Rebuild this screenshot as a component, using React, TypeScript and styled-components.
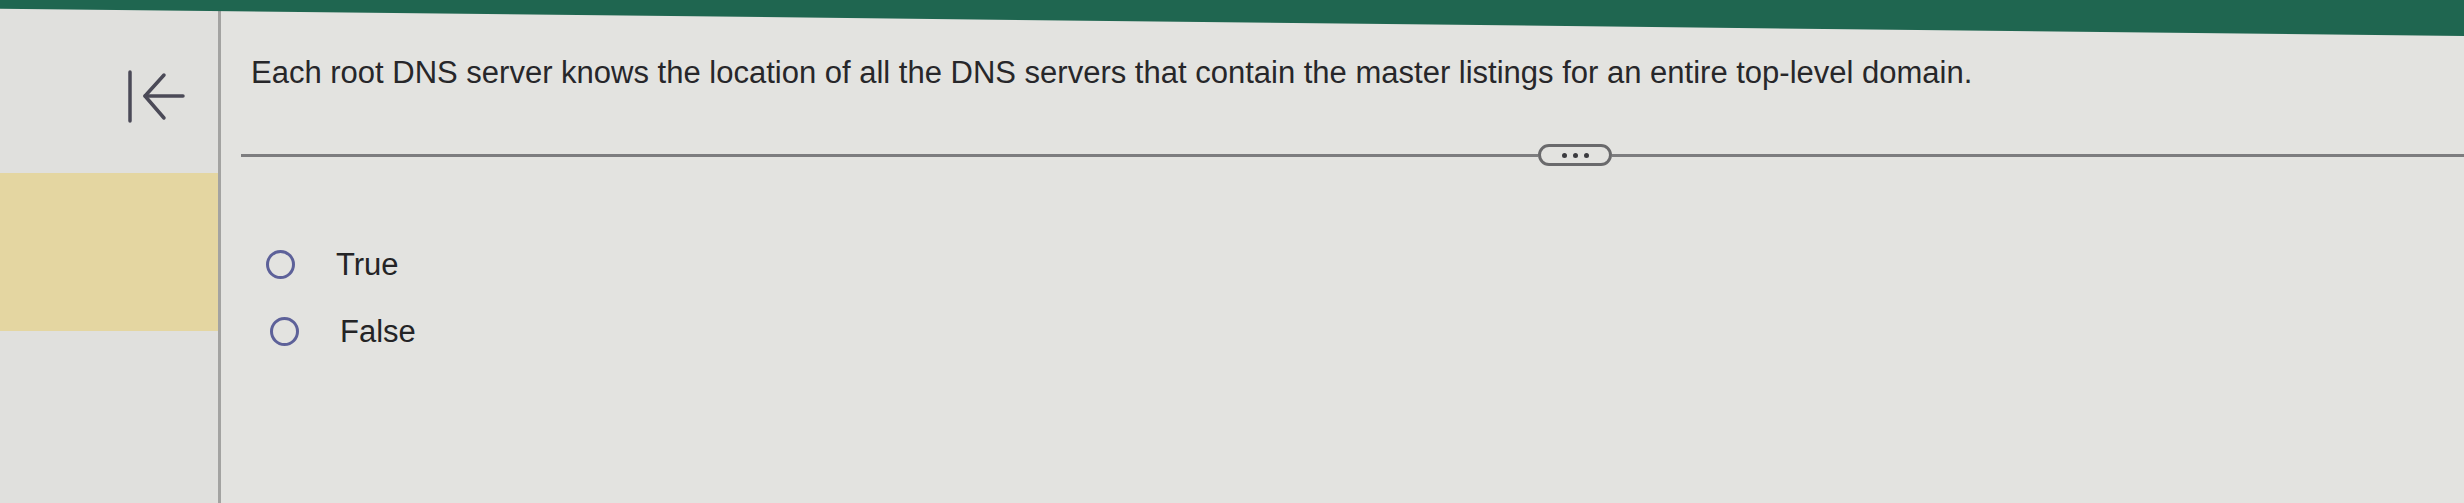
import React from "react";
import styled, { createGlobalStyle } from "styled-components";

const GlobalStyle = createGlobalStyle`
  html, body {
    margin: 0;
    padding: 0;
    background: #e1e1de;
    font-family: "Liberation Sans", Arial, sans-serif;
    overflow: hidden;
  }
`;

const Page = styled.div`
  width: 2464px;
  height: 503px;
  display: flex;
  flex-direction: column;
`;

// green app header, seen at an angle so it narrows toward the left
const TopBar = styled.div`
  height: 36px;
  flex-shrink: 0;
  background: #1f6650;
  clip-path: polygon(0 0, 100% 0, 100% 100%, 0 24%);
`;

const Layout = styled.div`
  flex: 1;
  display: flex;
  margin-top: -28px;
`;

const Sidebar = styled.aside`
  width: 218px;
  flex-shrink: 0;
  border-right: 3px solid #a3a3a1;
  display: flex;
  flex-direction: column;
  background: #e0e0dd;
`;

const CollapseButton = styled.button`
  align-self: flex-start;
  margin: 62px 0 0 126px;
  padding: 0;
  border: 0;
  background: none;
  width: 60px;
  height: 54px;
  display: flex;
  align-items: center;
  justify-content: center;
  cursor: pointer;
`;

const ActiveBand = styled.div`
  margin-top: 49px;
  height: 158px;
  background: #e4d6a1;
`;

const Main = styled.main`
  flex: 1;
  padding: 46px 0 0 20px;
  display: flex;
  flex-direction: column;
  background: #e3e3e0;
`;

const Question = styled.p`
  margin: 0 0 0 10px;
  font-size: 31px;
  line-height: 37px;
  color: #27272a;
`;

const Divider = styled.div`
  margin-top: 53px;
  display: grid;
  grid-template-columns: 1297px auto 1fr;
  align-items: center;
`;

const Rule = styled.div`
  height: 3px;
  background: #7d7d7f;
`;

const MorePill = styled.button`
  width: 74px;
  height: 22px;
  box-sizing: border-box;
  border: 3px solid #6a6a6c;
  border-radius: 11px;
  background: transparent;
  padding: 0;
  display: flex;
  align-items: center;
  justify-content: center;
  gap: 6px;
`;

const Dot = styled.span`
  width: 5px;
  height: 5px;
  border-radius: 50%;
  background: #3c3c40;
`;

const Options = styled.div`
  margin-top: 81px;
  padding-left: 25px;
  display: flex;
  flex-direction: column;
  gap: 32px;
`;

const Option = styled.label<{ $shift: number }>`
  display: flex;
  align-items: center;
  gap: 41px;
  margin-left: ${(p) => p.$shift}px;
  font-size: 31px;
  line-height: 35px;
  color: #242426;
  cursor: pointer;
`;

const Radio = styled.span`
  width: 29px;
  height: 29px;
  box-sizing: border-box;
  border: 3px solid #5d6199;
  border-radius: 50%;
  flex-shrink: 0;
`;

const CollapseIcon = () => (
  <svg width="60" height="54" viewBox="0 0 60 54" fill="none" stroke="#4b4a57" strokeWidth="3.5" strokeLinecap="round" strokeLinejoin="round">
    <line x1="4" y1="2" x2="4" y2="51" />
    <line x1="19" y1="26" x2="57" y2="26" />
    <polyline points="38,5 19,26 38,48" />
  </svg>
);

export default function App() {
  return (
    <Page>
      <GlobalStyle />
      <TopBar />
      <Layout>
        <Sidebar>
          <CollapseButton aria-label="Collapse">
            <CollapseIcon />
          </CollapseButton>
          <ActiveBand />
        </Sidebar>
        <Main>
          <Question>
            Each root DNS server knows the location of all the DNS servers that contain the master listings for an entire top-level domain.
          </Question>
          <Divider>
            <Rule />
            <MorePill aria-label="More">
              <Dot />
              <Dot />
              <Dot />
            </MorePill>
            <Rule />
          </Divider>
          <Options>
            <Option $shift={0}>
              <Radio />
              True
            </Option>
            <Option $shift={4}>
              <Radio />
              False
            </Option>
          </Options>
        </Main>
      </Layout>
    </Page>
  );
}
